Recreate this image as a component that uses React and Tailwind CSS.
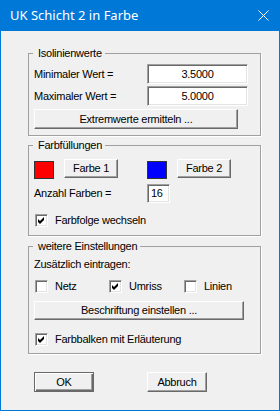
import React from "react";

const sunken =
  "border border-t-[#a0a0a0] border-l-[#a0a0a0] border-r-white border-b-white shadow-[inset_1px_1px_0_#696969,inset_-1px_-1px_0_#e3e3e3] bg-white";

const raised =
  "border border-t-white border-l-white border-r-[#696969] border-b-[#696969] shadow-[inset_-1px_-1px_0_#a0a0a0] bg-[#f0f0f0]";

function Button({ children, className = "", def = false }) {
  return (
    <button
      className={
        (def
          ? "border border-[#696969] shadow-[inset_1px_1px_0_#fff,inset_-1px_-1px_0_#696969,inset_-2px_-2px_0_#a0a0a0] bg-[#f0f0f0]"
          : raised) +
        " flex items-center justify-center text-black " +
        className
      }
    >
      {children}
    </button>
  );
}

function Check({ checked, label, className = "" }) {
  return (
    <div className={"flex items-center " + className}>
      <div className={"w-[13px] h-[13px] flex items-center justify-center " + sunken}>
        {checked && (
          <svg width="7" height="7" viewBox="0 0 7 7">
            <path d="M0 2 L2 4 L6 0 L6 3 L2 7 L0 5 Z" fill="#000" />
          </svg>
        )}
      </div>
      <span className="ml-[7px]">{label}</span>
    </div>
  );
}

function Group({ title, className = "", children }) {
  return (
    <fieldset
      className={
        "w-[233px] border border-[#a0a0a0] shadow-[1px_1px_0_#fff] px-[5px] " + className
      }
    >
      <legend className="ml-[-1px] pl-[5px] pr-[3px] leading-[13px]">{title}</legend>
      {children}
    </fieldset>
  );
}

export default function App() {
  return (
    <div
      className="w-[280px] h-[411px] bg-[#0078d7] px-[1px] pb-[1px] flex flex-col text-[11px] tracking-[-0.25px] text-black"
      style={{ fontFamily: '"Liberation Sans", Arial, sans-serif' }}
    >
      {/* TITLE */}
      <div className="h-[31px] flex items-center justify-between pl-[9px] pr-[10px] text-white">
        <span
          className="text-[13px] tracking-normal"
          style={{ fontFamily: '"Noto Sans", sans-serif' }}
        >
          UK Schicht 2 in Farbe
        </span>
        <svg width="11" height="11" viewBox="0 0 11 11">
          <path d="M0.5 0.5 L10.5 10.5 M10.5 0.5 L0.5 10.5" stroke="#fff" strokeWidth="1" />
        </svg>
      </div>

      {/* BODY */}
      <div className="flex-1 bg-[#f0f0f0] pl-[27px] pt-[16px] flex flex-col">

        <Group title="Isolinienwerte" className="pt-[4px] pb-[6px]">
          <div className="h-[20px] flex items-center">
            <span className="w-[113px]">Minimaler Wert =</span>
            <div className={"w-[101px] h-[20px] flex items-center justify-center " + sunken}>3.5000</div>
          </div>
          <div className="h-[20px] mt-[2px] flex items-center">
            <span className="w-[113px]">Maximaler Wert =</span>
            <div className={"w-[101px] h-[20px] flex items-center justify-center " + sunken}>5.0000</div>
          </div>
          <Button className="mt-[3px] w-[204px] h-[20px]">Extremwerte ermitteln ...</Button>
        </Group>

        <Group title="Farbfüllungen" className="mt-[3px] pt-[7px] pb-[7px]">
          <div className="h-[20px] flex items-start">
            <div className="mt-[2px] w-[20px] h-[18px] bg-[#ff0000] border border-[#333]" />
            <Button className="ml-[10px] w-[54px] h-[19px]">Farbe 1</Button>
            <div className="ml-[29px] mt-[2px] w-[20px] h-[18px] bg-[#0000ff] border border-[#333]" />
            <Button className="ml-[10px] w-[54px] h-[19px]">Farbe 2</Button>
          </div>
          <div className="h-[19px] mt-[5px] flex items-center">
            <span className="w-[113px]">Anzahl Farben =</span>
            <div className={"w-[23px] h-[19px] flex items-center pl-[3px] " + sunken}>16</div>
          </div>
          <Check checked label="Farbfolge wechseln" className="h-[15px] mt-[10px] ml-[1px]" />
        </Group>

        <Group title="weitere Einstellungen" className="mt-[4px] pt-[5px] pb-[7px]">
          <div className="h-[13px] flex items-center">Zusätzlich eintragen:</div>
          <div className="h-[13px] mt-[9px] flex items-center ml-[1px]">
            <Check label="Netz" className="w-[74px]" />
            <Check checked label="Umriss" className="w-[75px]" />
            <Check label="Linien" />
          </div>
          <Button className="mt-[8px] w-[210px] h-[19px]">Beschriftung einstellen ...</Button>
          <Check checked label="Farbbalken mit Erläuterung" className="h-[13px] mt-[13px] ml-[1px]" />
        </Group>

        <div className="mt-[18px] pl-[6px] flex">
          <Button def className="w-[60px] h-[20px]">OK</Button>
          <Button className="ml-[53px] w-[60px] h-[20px]">Abbruch</Button>
        </div>
      </div>
    </div>
  );
}
